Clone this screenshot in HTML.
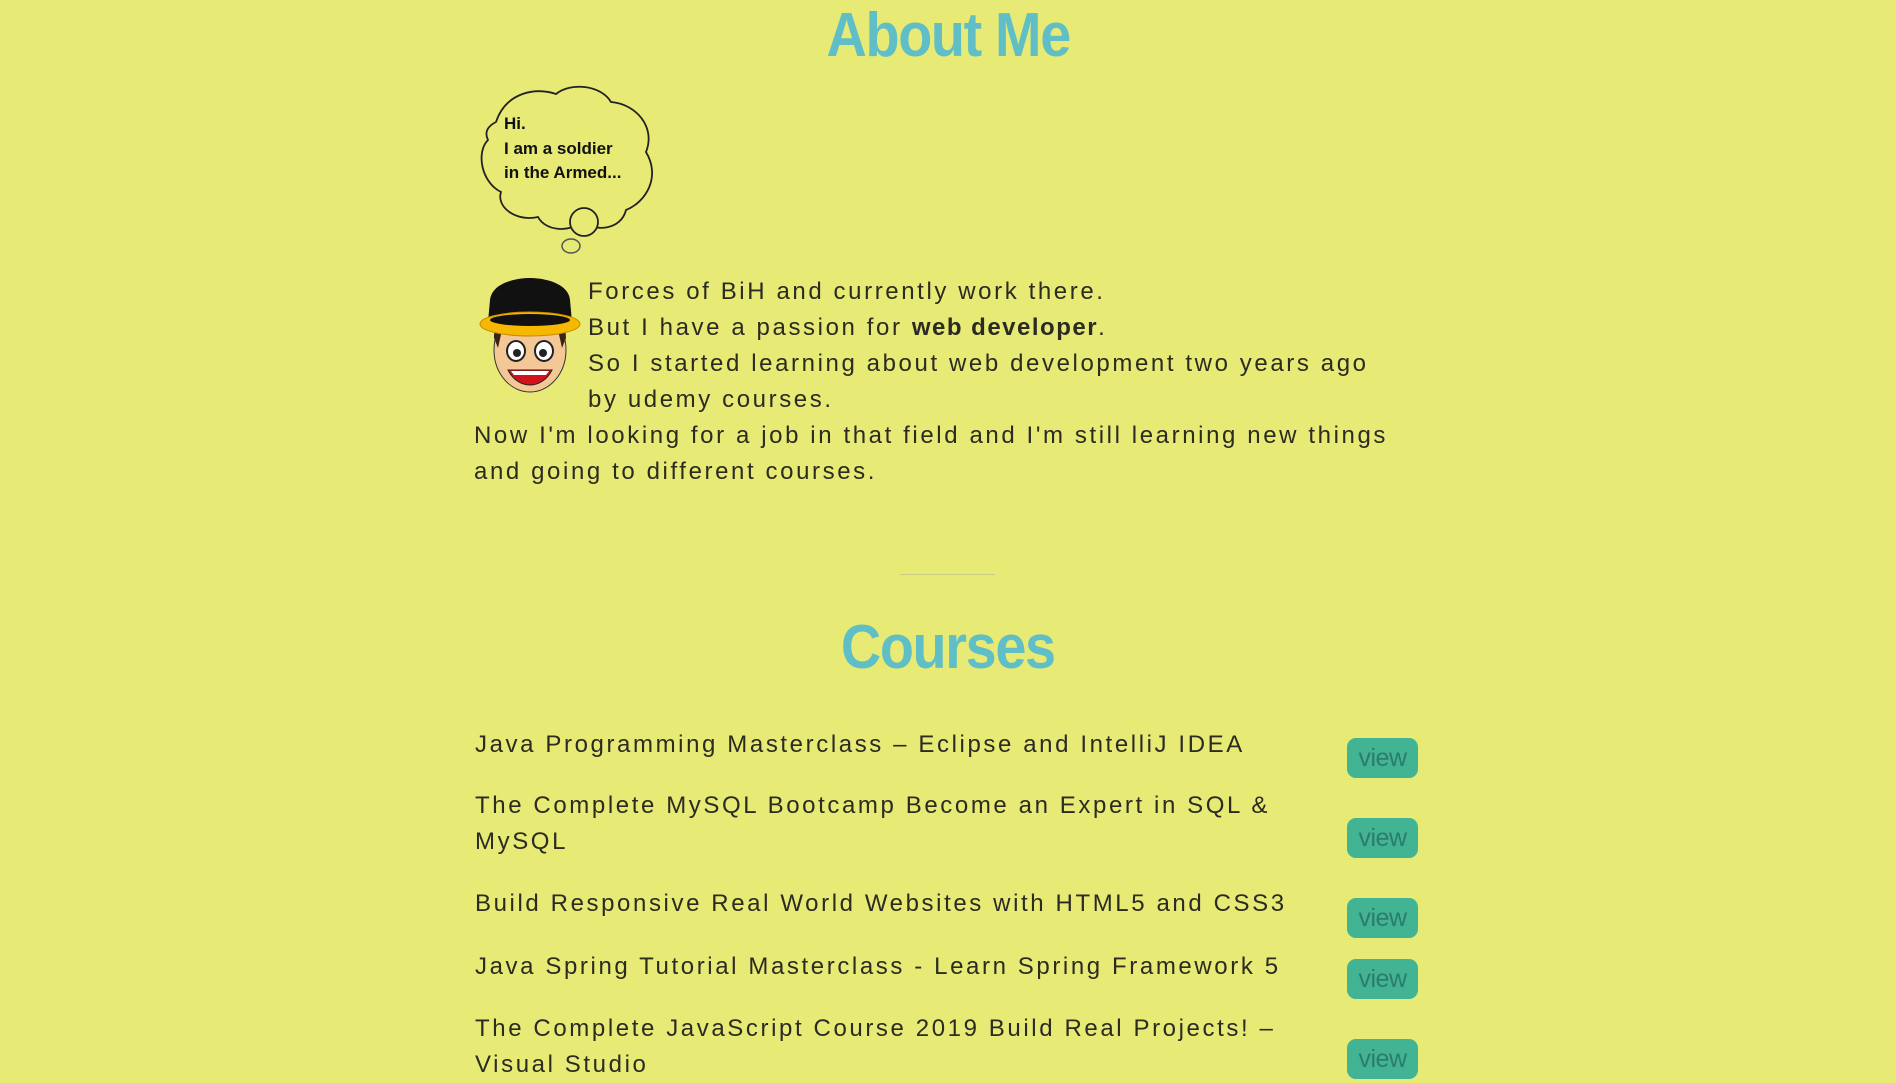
<!DOCTYPE html>
<html><head><meta charset="utf-8"><style>
html,body{margin:0;padding:0;background:#e8ea76;width:1896px;height:1079px;overflow:hidden;font-family:"Liberation Sans",sans-serif;color:#2b2b22}
.h{position:absolute;left:0;width:1896px;text-align:center;color:#60bfc6;font-family:"Liberation Sans",sans-serif;font-weight:bold;font-size:62px;letter-spacing:-1.5px}
.h span{display:inline-block;transform:scaleX(0.9)}
.t{position:absolute;font-size:24px;letter-spacing:2.6px;line-height:36px;white-space:nowrap}
.c{position:absolute;left:475px;font-size:24px;letter-spacing:2.6px;line-height:36px;white-space:nowrap}
.v{position:absolute;left:1347px;width:71px;height:40px;border-radius:9px;background:#43b493;color:#2a7d69;font-size:25px;text-align:center;line-height:40px;letter-spacing:-0.5px}
</style></head><body>
<div class="h" style="top:0px"><span>About Me</span></div>
<svg style="position:absolute;left:476px;top:82px" width="188" height="176" viewBox="0 0 188 176">
<path d="M20 40 C30 10,60 5,80 12 C95 0,125 3,135 20 C160 22,180 45,170 70 C185 95,170 120,150 128 C145 148,120 150,105 140 C95 150,70 150,62 135 C40 140,20 125,25 110 C5 100,0 70,12 58 C8 50,12 44,20 40 Z" fill="none" stroke="#222" stroke-width="1.8"/>
<circle cx="108" cy="140" r="14" fill="#e8ea76" stroke="#222" stroke-width="1.8"/>
<ellipse cx="95" cy="164" rx="9" ry="7" fill="none" stroke="#555" stroke-width="1.5"/>
<text x="28" y="47" font-family="Liberation Sans,sans-serif" font-weight="bold" font-size="17" fill="#111">Hi.</text>
<text x="28" y="72" font-family="Liberation Sans,sans-serif" font-weight="bold" font-size="17" fill="#111">I am a soldier</text>
<text x="28" y="96" font-family="Liberation Sans,sans-serif" font-weight="bold" font-size="17" fill="#111">in the Armed...</text>
</svg>
<svg style="position:absolute;left:478px;top:278px" width="104" height="118" viewBox="0 0 104 118">
<ellipse cx="52" cy="72" rx="36" ry="42" fill="#f4c896" stroke="#333" stroke-width="1"/>
<path d="M16 60 C16 40,30 36,52 36 C74 36,88 40,88 60 L84 70 L80 52 L24 52 L20 70 Z" fill="#3a2416"/>
<path d="M12 22 C14 4,40 0,52 0 C64 0,90 4,92 22 L94 44 L10 44 Z" fill="#111"/>
<ellipse cx="52" cy="46" rx="50" ry="12" fill="#f6b800" stroke="#c98a00" stroke-width="1"/>
<ellipse cx="52" cy="42" rx="40" ry="6" fill="#111"/>
<ellipse cx="38" cy="73" rx="9" ry="10" fill="#fff" stroke="#222" stroke-width="2"/>
<ellipse cx="66" cy="73" rx="9" ry="10" fill="#fff" stroke="#222" stroke-width="2"/>
<circle cx="39" cy="75" r="4" fill="#222"/><circle cx="65" cy="75" r="4" fill="#222"/>
<path d="M30 92 C40 112,64 112,74 92 Z" fill="#d2121b" stroke="#222" stroke-width="1"/>
<path d="M33 93 L71 93 L68 97 L36 97 Z" fill="#fff"/>
</svg>
<div class="t" style="left:588px;top:274px">Forces of BiH and currently work there.</div>
<div class="t" style="left:588px;top:310px">But I have a passion for <b style="letter-spacing:1.5px">web developer</b>.</div>
<div class="t" style="left:588px;top:346px">So I started learning about web development two years ago</div>
<div class="t" style="left:588px;top:382px">by udemy courses.</div>
<div class="t" style="left:474px;top:418px">Now I'm looking for a job in that field and I'm still learning new things</div>
<div class="t" style="left:474px;top:454px">and going to different courses.</div>
<div style="position:absolute;left:900px;top:574px;width:95px;height:1px;background:#c9cc84"></div>
<div class="h" style="top:612px"><span>Courses</span></div>
<div class="c" style="top:727px">Java Programming Masterclass – Eclipse and IntelliJ IDEA</div>
<div class="c" style="top:788px">The Complete MySQL Bootcamp Become an Expert in SQL &amp;<br>MySQL</div>
<div class="c" style="top:886px">Build Responsive Real World Websites with HTML5 and CSS3</div>
<div class="c" style="top:949px">Java Spring Tutorial Masterclass - Learn Spring Framework 5</div>
<div class="c" style="top:1011px">The Complete JavaScript Course 2019 Build Real Projects! –<br>Visual Studio</div>
<div class="v" style="top:738px">view</div>
<div class="v" style="top:818px">view</div>
<div class="v" style="top:898px">view</div>
<div class="v" style="top:959px">view</div>
<div class="v" style="top:1039px">view</div>
</body></html>
